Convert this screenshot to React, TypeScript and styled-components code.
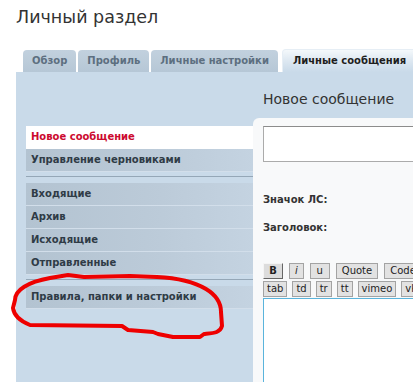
import React from 'react';
import styled, { createGlobalStyle } from 'styled-components';

const GlobalStyle = createGlobalStyle`
	html, body {
		margin: 0;
		padding: 0;
		background: #ffffff;
		overflow: hidden;
		width: 413px;
		height: 382px;
		font-family: "DejaVu Sans", Verdana, sans-serif;
	}
`;

const tabs = ['Обзор', 'Профиль', 'Личные настройки', 'Личные сообщения'];
const menuTop = ['Новое сообщение', 'Управление черновиками'];
const folders = ['Входящие', 'Архив', 'Исходящие', 'Отправленные'];
const toolsTop = ['B', 'i', 'u', 'Quote', 'Code'];
const toolsBottom = ['tab', 'td', 'tr', 'tt', 'vimeo', 'vk'];

const App: React.FC = () => {
	return <Page>
				<GlobalStyle />
				<Title>Личный раздел</Title>
				<TabBar>
					{tabs.map((t, i) => <Tab key={t} active={i === tabs.length - 1}>{t}</Tab>)}
				</TabBar>
				<Panel>
					<Sidebar>
						{menuTop.map((m, i) => <MenuItem key={m} active={i === 0}>{m}</MenuItem>)}
						<Separator />
						{folders.map(f => <MenuItem key={f}>{f}</MenuItem>)}
						<Separator />
						<MenuItem>Правила, папки и настройки</MenuItem>
					</Sidebar>
					<Main>
						<Heading>Новое сообщение</Heading>
						<Content>
							<TextInput />
							<Label top={31}>Значок ЛС:</Label>
							<Label top={14}>Заголовок:</Label>
							<ToolRow top={28} gap={6}>
								{toolsTop.map(t => <ToolButton key={t} large bold={t === 'B'} italic={t === 'i'}>{t}</ToolButton>)}
							</ToolRow>
							<ToolRow top={2} gap={5}>
								{toolsBottom.map(t => <ToolButton key={t}>{t}</ToolButton>)}
							</ToolRow>
							<MessageBox />
						</Content>
					</Main>
				</Panel>
				<Scribble width="413" height="382" viewBox="0 0 413 382">
					<path
						d="M 15 300 C 15 290, 28 282, 50 278 L 68 275 L 84 277 L 130 276 L 157 277 C 178 278, 196 283, 206 289 C 216 295, 221 303, 221 312 L 222 326 C 220 333, 214 333, 204 334 L 200 337 L 173 337 L 158 334 L 153 332 L 128 330 L 122 326 L 30 325 C 20 321, 14 316, 13 308 Z"
						fill="none"
						stroke="#ee0000"
						strokeWidth="4"
						strokeLinejoin="round"
					/>
				</Scribble>
			</Page>;
};

const Page = styled.div`
	position: relative;
	width: 413px;
	height: 382px;
	padding-left: 16px;
	box-sizing: border-box;
	overflow: hidden;
`

const Title = styled.h1`
	margin: 0;
	padding-top: 6px;
	height: 43px;
	box-sizing: border-box;
	font-size: 17.5px;
	line-height: 22px;
	font-weight: normal;
	color: #333333;
`

const TabBar = styled.div`
	display: flex;
	align-items: flex-end;
	gap: 2px;
	height: 29px;
	padding-left: 7px;
	width: 600px;
`

const Tab = styled.div<{ active?: boolean }>`
	height: ${p => p.active ? 23 : 22}px;
	line-height: 22px;
	padding: 0 ${p => p.active ? 10 : 9}px;
	margin-left: ${p => p.active ? 2 : 0}px;
	border-radius: 4px 4px 0 0;
	font-size: 10px;
	font-weight: bold;
	white-space: nowrap;
	box-sizing: border-box;
	color: ${p => p.active ? '#1e1e1e' : '#5d6f80'};
	background: ${p => p.active
		? 'linear-gradient(180deg, #f4f8fb 0%, #dfe9f2 45%, #c9dae9 100%)'
		: 'linear-gradient(180deg, #c2d1de 0%, #b6c7d6 100%)'};
	border: ${p => p.active ? '1px solid #e6eef5' : 'none'};
	border-bottom: none;
`

const Panel = styled.div`
	display: grid;
	grid-template-columns: 237px 1fr;
	width: 600px;
	height: 320px;
	background: #c9dae9;
`

const Sidebar = styled.nav`
	display: flex;
	flex-direction: column;
	padding: 54px 0 0 10px;
`

const MenuItem = styled.div<{ active?: boolean }>`
	height: 23px;
	line-height: 22px;
	padding-left: 5px;
	box-sizing: border-box;
	border-bottom: 1px solid ${p => p.active ? '#ffffff' : '#d2deea'};
	font-size: 10px;
	font-weight: bold;
	white-space: nowrap;
	color: ${p => p.active ? '#cc0a2f' : '#2f3b46'};
	background: ${p => p.active ? '#ffffff' : 'linear-gradient(90deg, #b3c3d1 0%, #bccbd9 60%, #c4d3e1 100%)'};
`

const Separator = styled.div`
	height: 1px;
	margin: 4px 0 6px;
	background: #95a7b7;
`

const Main = styled.section`
	display: flex;
	flex-direction: column;
`

const Heading = styled.h2`
	margin: 0;
	height: 46px;
	padding: 17px 0 0 10px;
	box-sizing: border-box;
	font-size: 14px;
	line-height: 20px;
	font-weight: normal;
	color: #333333;
`

const Content = styled.div`
	flex: 1;
	display: flex;
	flex-direction: column;
	align-items: flex-start;
	padding: 8px 0 0 10px;
	border-radius: 6px 0 0 0;
	background: #f8f9fa;
`

const TextInput = styled.div`
	width: 300px;
	height: 36px;
	box-sizing: border-box;
	background: #ffffff;
	border: 1px solid #ababab;
	border-top-color: #8c8c8c;
`

const Label = styled.div<{ top: number }>`
	margin-top: ${p => p.top}px;
	font-size: 10px;
	line-height: 14px;
	font-weight: bold;
	color: #333333;
`

const ToolRow = styled.div<{ top: number, gap: number }>`
	display: flex;
	gap: ${p => p.gap}px;
	margin-top: ${p => p.top}px;
	white-space: nowrap;
`

const ToolButton = styled.div<{ bold?: boolean, italic?: boolean, large?: boolean }>`
	height: 16px;
	min-width: ${p => p.large && !p.italic ? 20 : 0}px;
	line-height: 14px;
	padding: 0 ${p => p.large ? 5 : 3}px;
	box-sizing: border-box;
	text-align: center;
	font-size: 10px;
	font-weight: ${p => p.bold ? 'bold' : 'normal'};
	font-style: ${p => p.italic ? 'italic' : 'normal'};
	color: #222222;
	background: #e2e2e2;
	border: 1px solid #a3a3a3;
	${p => p.bold ? 'border-color: #f4f4f4 #666 #666 #f4f4f4; background: #dcdcdc;' : ''}
`

const MessageBox = styled.div`
	margin-top: 1px;
	width: 300px;
	height: 120px;
	box-sizing: border-box;
	background: #ffffff;
	border: 1px solid #5ab4dc;
`

const Scribble = styled.svg`
	position: absolute;
	left: 0;
	top: 0;
	pointer-events: none;
`

export default App;
